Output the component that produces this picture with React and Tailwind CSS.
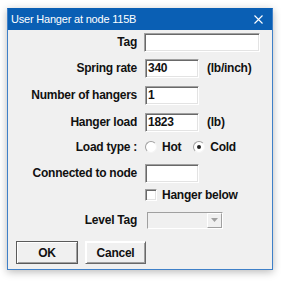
const sunken = 'bg-white border border-t-[#a0a0a0] border-l-[#a0a0a0] border-r-white border-b-white shadow-[inset_1px_1px_0_#696969,inset_-1px_-1px_0_#e3e3e3]';

const Row = ({ label, className, children }) => (
  <div className={`flex items-center h-[20px] ${className}`}>
    <div className="w-[129px] shrink-0 text-right pr-[0px]">{label}</div>
    <div className="ml-[7px] flex items-center h-full">{children}</div>
  </div>
);

const Field = ({ value, w }) => (
  <div className={`${sunken} h-[19px] ${w} pl-[2px] pt-[1px] leading-[15px]`}>{value}</div>
);

const Radio = ({ checked }) => (
  <span className="w-[12px] h-[12px] rounded-full bg-white border border-t-[#a0a0a0] border-l-[#a0a0a0] border-r-[#f4f4f4] border-b-[#f4f4f4] flex items-center justify-center">
    {checked && <span className="w-[4px] h-[4px] rounded-full bg-[#222]" />}
  </span>
);

const Button = ({ children, w, def }) => (
  <div
    className={`${w} h-[23px] flex items-center justify-center bg-[#f0f0f0] border ${def ? 'border-[#5a5a5a]' : 'border-t-white border-l-white border-r-[#696969] border-b-[#696969]'} shadow-[inset_1px_1px_0_#ffffff,inset_-1px_-1px_0_#a0a0a0]`}
  >
    {children}
  </div>
);

export default function App() {
  return (
    <div className="w-[281px] h-[281px] bg-white pl-[7px] pt-[8px]" style={{ fontFamily: "'Liberation Sans', Arial, sans-serif" }}>
      <div className="w-[266px] h-[262px] border border-[#3f80c8] border-t-[#0a5fb4] bg-[#f0f0f0] flex flex-col shadow-[0_2px_8px_rgba(0,0,0,0.28)]">
        {/* Title bar */}
        <div className="h-[21px] bg-[#0a5fb4] flex items-center justify-between pl-[3px] pr-[9px] text-white text-[11px] tracking-[-0.2px]">
          <span>User Hanger at node 115B</span>
          <svg width="9" height="9" viewBox="0 0 9 9">
            <path d="M0.5 0.5L8.5 8.5M8.5 0.5L0.5 8.5" stroke="white" strokeWidth="1.1" />
          </svg>
        </div>

        {/* Body */}
        <div className="flex flex-col text-[12px] font-bold tracking-[-0.25px] text-[#111]">
          <Row label="Tag" className="mt-[2px]">
            <Field value="" w="w-[116px]" />
          </Row>
          <Row label="Spring rate" className="mt-[6px]">
            <Field value="340" w="w-[54px] ml-[1px]" />
            <span className="ml-[8px]">(lb/inch)</span>
          </Row>
          <Row label="Number of hangers" className="mt-[7px]">
            <Field value="1" w="w-[54px] ml-[1px]" />
          </Row>
          <Row label="Hanger load" className="mt-[7px]">
            <Field value="1823" w="w-[54px] ml-[1px]" />
            <span className="ml-[8px]">(lb)</span>
          </Row>
          <Row label="Load type :" className="mt-[5px]">
            <div className="ml-[1px] flex items-center">
              <Radio />
              <span className="ml-[5px]">Hot</span>
              <span className="ml-[12px]"><Radio checked /></span>
              <span className="ml-[5px]">Cold</span>
            </div>
          </Row>
          <Row label="Connected to node" className="mt-[6px]">
            <Field value="" w="w-[54px] ml-[1px]" />
          </Row>
          <Row label="" className="mt-[2px]">
            <div className="ml-[1px] flex items-center">
              <span className={`${sunken} w-[12px] h-[12px]`} />
              <span className="ml-[5px]">Hanger below</span>
            </div>
          </Row>
          <Row label="Level Tag" className="mt-[5px]">
            <div className="ml-[3px] w-[76px] h-[17px] flex border border-t-[#a0a0a0] border-l-[#a0a0a0] border-r-white border-b-white bg-[#f0f0f0]">
              <div className="flex-1" />
              <div className="w-[15px] h-full flex items-center justify-center border border-t-white border-l-white border-r-[#a0a0a0] border-b-[#a0a0a0]">
                <svg width="7" height="4" viewBox="0 0 7 4">
                  <path d="M0 0H7L3.5 4Z" fill="#a0a0a0" />
                </svg>
              </div>
            </div>
          </Row>
          <div className="flex mt-[11px] ml-[8px] gap-[7px]">
            <Button w="w-[62px]" def>OK</Button>
            <Button w="w-[61px]">Cancel</Button>
          </div>
        </div>
      </div>
    </div>
  );
}
